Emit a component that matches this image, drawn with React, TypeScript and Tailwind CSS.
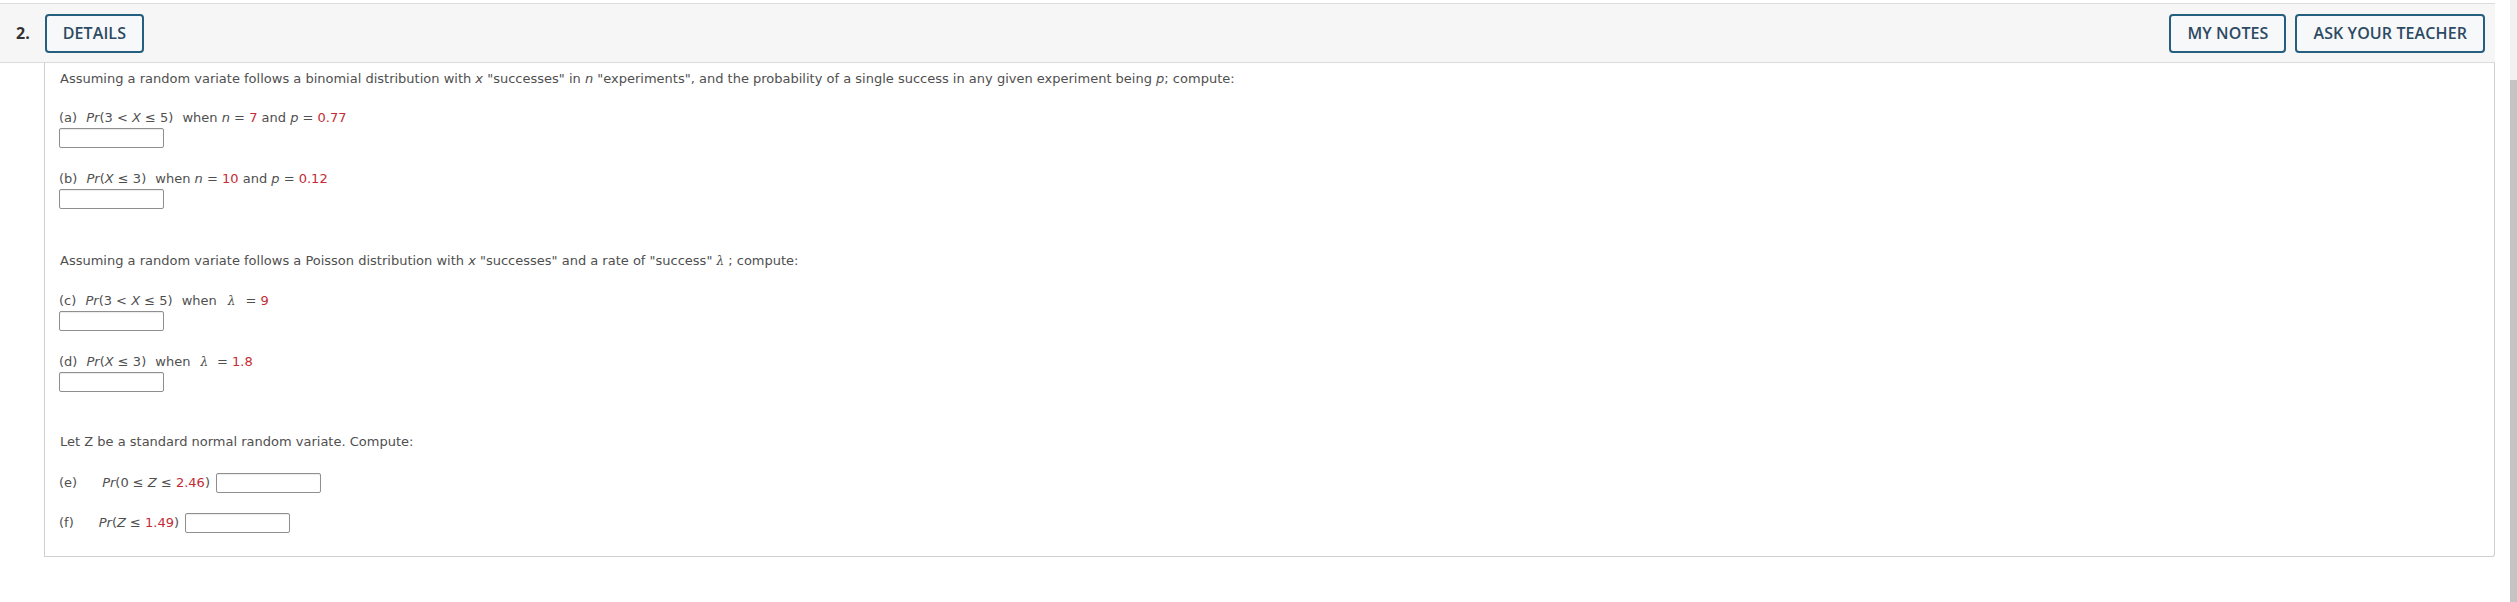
import React from "react";

const Red = ({ children }: { children: React.ReactNode }) => (
  <span className="text-[#c42b35]">{children}</span>
);

const I = ({ children }: { children: React.ReactNode }) => <i className="italic">{children}</i>;

const Lambda = ({ className = "" }: { className?: string }) => (
  <span className={`font-['DejaVu_Serif',serif] italic text-[12px] ${className}`}>λ</span>
);

const AnswerBox = ({ className = "" }: { className?: string }) => (
  <input
    type="text"
    className={`block h-[20px] w-[105px] rounded-[2px] border border-[#8f8f8f] bg-white shadow-[inset_0_1px_1px_rgba(0,0,0,0.08)] outline-none ${className}`}
  />
);

const HeaderButton = ({ label, className = "" }: { label: string; className?: string }) => (
  <button
    className={`h-[39px] rounded-[4px] border-2 border-[#245f80] bg-[#f7f8f9] px-[16px] text-[16px] font-semibold tracking-[0.1px] text-[#2d4a63] ${className}`}
  >
    {label}
  </button>
);

export default function App() {
  return (
    <div className="flex min-h-[602px] w-full bg-white">
      <div className="flex-1">
        {/* question header */}
        <div className="mt-[3px] flex h-[60px] items-center border-y border-[#dcdcdc] bg-[#f6f6f6] pl-[16px] pr-[10px] font-['Open_Sans',sans-serif]">
          <span className="text-[16px] font-bold text-[#333]">2.</span>
          <HeaderButton label="DETAILS" className="ml-[15px]" />
          <div className="flex-1" />
          <HeaderButton label="MY NOTES" />
          <HeaderButton label="ASK YOUR TEACHER" className="ml-[9px]" />
        </div>

        {/* question body */}
        <div className="ml-[44px] rounded-br-[3px] border-x border-b border-[#cfcfcf] pb-[22px] pl-[15px] pt-[6px] font-['DejaVu_Sans',Verdana,sans-serif] text-[13px] leading-[20px] text-[#4f4f4f]">
          <p>
            Assuming a random variate follows a binomial distribution with <I>x</I> "successes" in{" "}
            <I>n</I> "experiments", and the probability of a single success in any given experiment
            being <I>p</I>; compute:
          </p>

          <p className="mt-[19px] -ml-[1px]">
            (a) <span className="mx-[5px]"><I>Pr</I>(3 &lt; <I>X</I> ≤ 5)</span> when <I>n</I> ={" "}
            <Red>7</Red> and <I>p</I> = <Red>0.77</Red>
          </p>
          <AnswerBox className="-ml-[1px]" />

          <p className="mt-[21px] -ml-[1px]">
            (b) <span className="mx-[5px]"><I>Pr</I>(<I>X</I> ≤ 3)</span> when <I>n</I> ={" "}
            <Red>10</Red> and <I>p</I> = <Red>0.12</Red>
          </p>
          <AnswerBox className="-ml-[1px]" />

          <p className="mt-[42px]">
            Assuming a random variate follows a Poisson distribution with <I>x</I> "successes" and a
            rate of "success" <Lambda /> ; compute:
          </p>

          <p className="mt-[20px] -ml-[1px]">
            (c) <span className="mx-[5px]"><I>Pr</I>(3 &lt; <I>X</I> ≤ 5)</span> when
            <Lambda className="ml-[11px] mr-[10px]" />= <Red>9</Red>
          </p>
          <AnswerBox className="-ml-[1px]" />

          <p className="mt-[21px] -ml-[1px]">
            (d) <span className="mx-[5px]"><I>Pr</I>(<I>X</I> ≤ 3)</span> when
            <Lambda className="ml-[10px] mr-[9px]" />= <Red>1.8</Red>
          </p>
          <AnswerBox className="-ml-[1px]" />

          <p className="mt-[40px]">Let Z be a standard normal random variate. Compute:</p>

          <div className="mt-[20px] flex h-[22px] items-center -ml-[1px]">
            <span>(e)</span>
            <span className="ml-[25px]">
              <I>Pr</I>(0 ≤ <I>Z</I> ≤ <Red>2.46</Red>)
            </span>
            <AnswerBox className="ml-[6px]" />
          </div>

          <div className="mt-[18px] flex h-[22px] items-center -ml-[1px]">
            <span>(f)</span>
            <span className="ml-[25px]">
              <I>Pr</I>(<I>Z</I> ≤ <Red>1.49</Red>)
            </span>
            <AnswerBox className="ml-[6px]" />
          </div>
        </div>
      </div>

      {/* window scrollbar */}
      <div className="flex w-[22px] justify-end">
        <div className="flex w-[7px] flex-col">
          <div className="h-[80px] bg-[#f1f1f1]" />
          <div className="flex-1 bg-[#c4c4c4]" />
        </div>
      </div>
    </div>
  );
}
